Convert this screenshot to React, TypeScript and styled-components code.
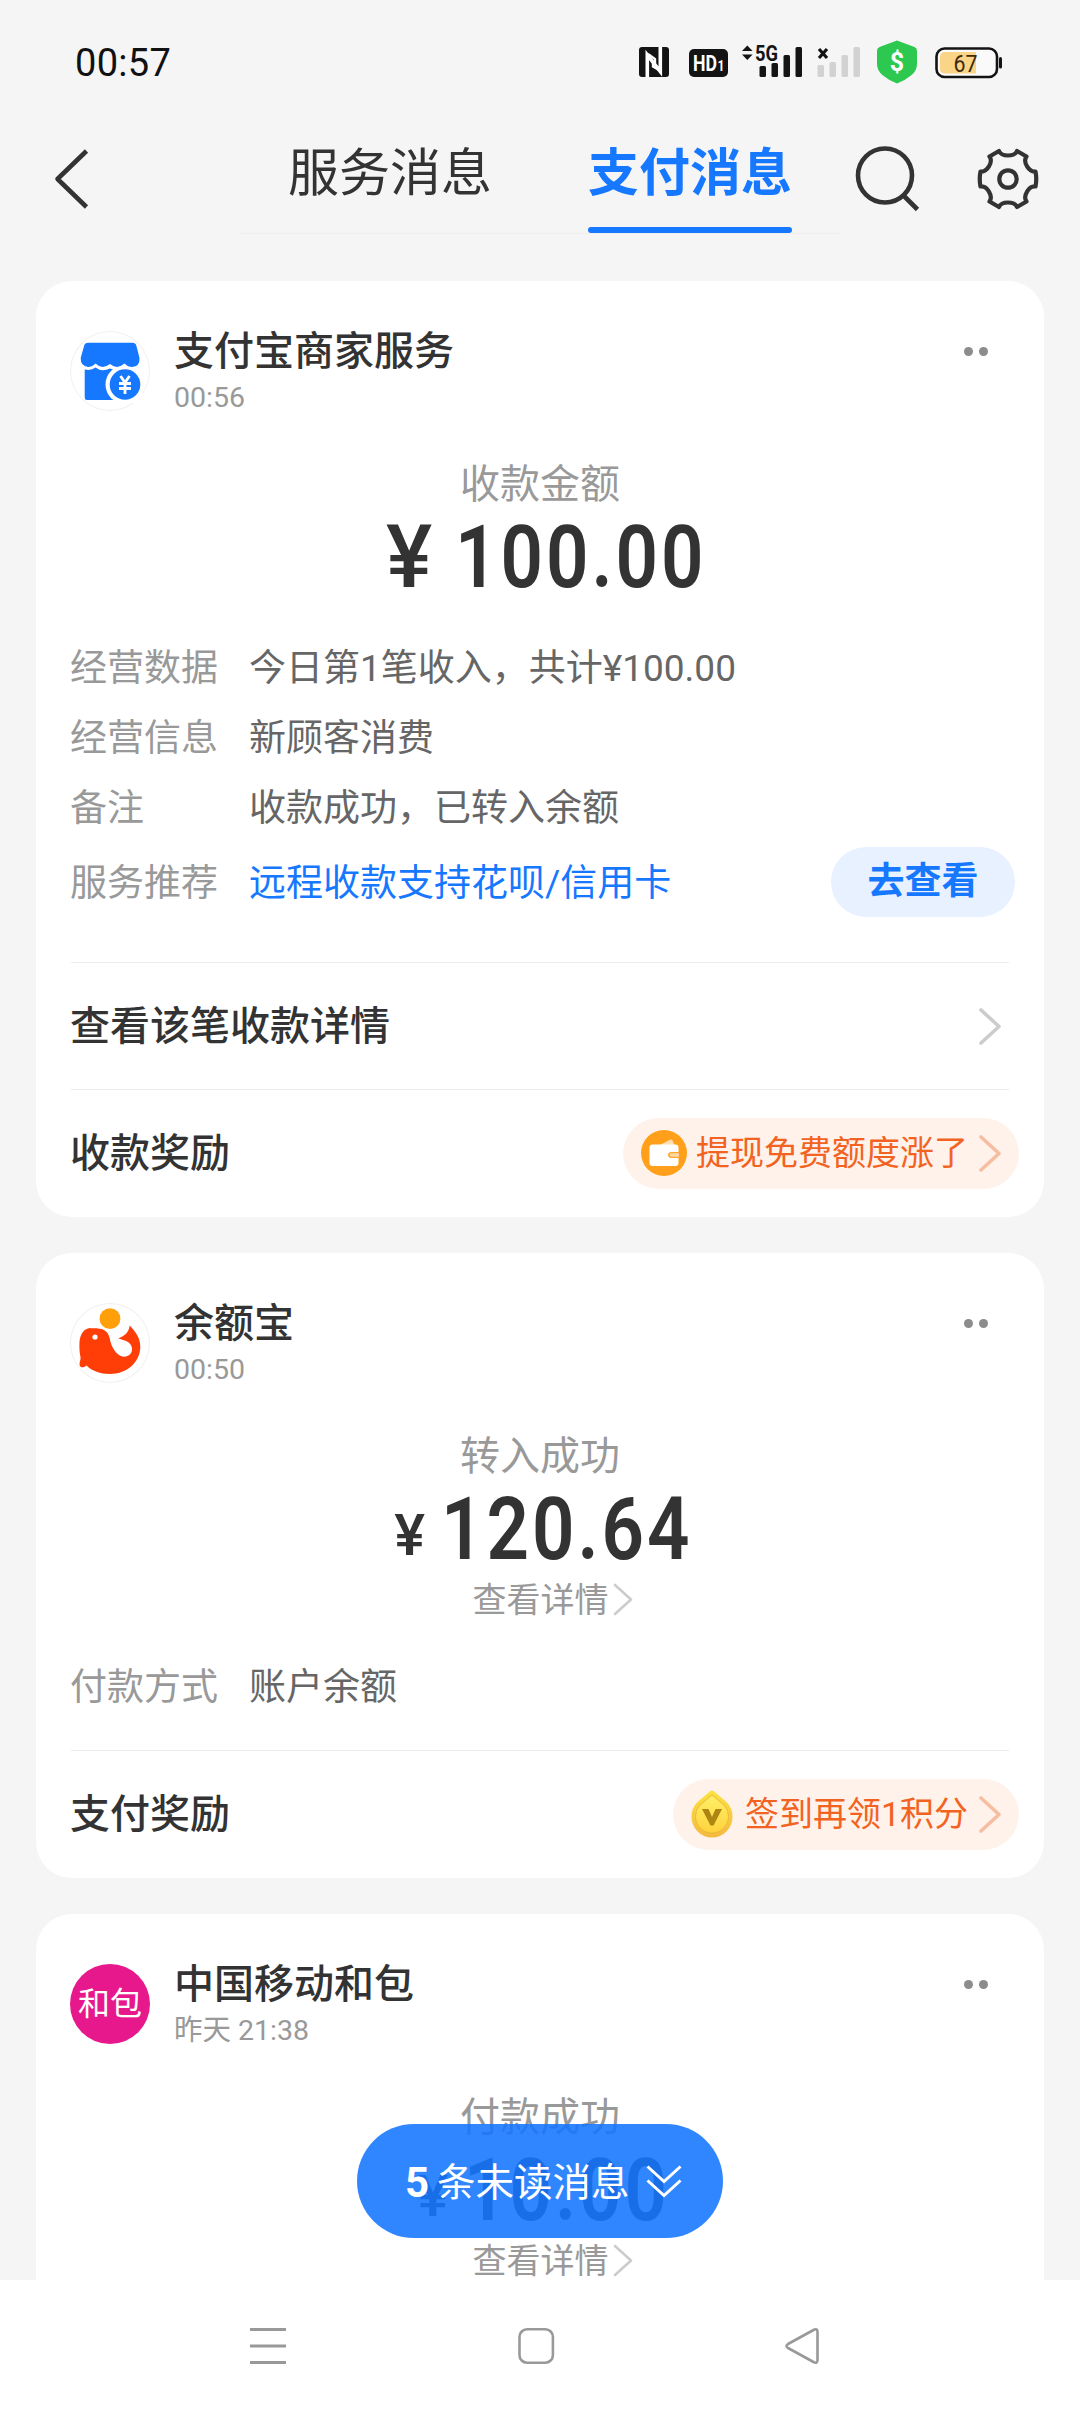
import React from 'react';
import styled, { createGlobalStyle } from 'styled-components';

const SANS = 'Roboto, "Noto Sans CJK SC", "Noto Sans", sans-serif';

const GlobalStyle = createGlobalStyle`
  *, *::before, *::after { box-sizing: border-box; }
  html, body { margin: 0; padding: 0; background: #f5f5f5; }
  body { font-family: ${SANS}; color: #333; }
  svg { display: block; flex: none; }
`;

const Screen = styled.div`
  position: relative;
  display: flex;
  flex-direction: column;
  width: 1080px;
  height: 2412px;
  overflow: hidden;
  background: #f5f5f5;
`;

const StatusBar = styled.header`
  display: flex;
  align-items: center;
  justify-content: space-between;
  height: 124px;
  padding: 0 76px 0 75px;
`;

const Clock = styled.time`
  font-size: 38px;
  line-height: 44px;
  padding-top: 2px;
  letter-spacing: 0.3px;
  color: #111;
`;

const StatusIcons = styled.div`
  display: flex;
  align-items: center;
`;

const NavBar = styled.nav`
  display: flex;
  align-items: flex-start;
  height: 157px;
  padding-left: 53px;
`;

const IconButton = styled.button<{ $width: number; $top: number }>`
  display: flex;
  justify-content: flex-start;
  flex: none;
  width: ${(p) => p.$width}px;
  padding: ${(p) => p.$top}px 0 0;
  border: 0;
  background: none;
`;

const Tabs = styled.div`
  display: flex;
  flex: none;
  width: 600px;
  height: 110px;
  margin-right: 15px;
  border-bottom: 1px solid #eeeeee;
`;

const Tab = styled.div<{ $active?: boolean }>`
  display: flex;
  flex-direction: column;
  align-items: center;
  justify-content: space-between;
  width: 204px;
  margin-left: ${(p) => (p.$active ? 96 : 48)}px;
  padding-top: 17px;
  font-size: 51px;
  line-height: 66px;
  white-space: nowrap;
  font-weight: ${(p) => (p.$active ? 700 : 400)};
  color: ${(p) => (p.$active ? '#1677ff' : '#333')};
`;

const Underline = styled.span`
  width: 204px;
  height: 6px;
  border-radius: 3px;
  background: #1677ff;
`;

const Feed = styled.main`
  flex: 1;
  min-height: 0;
  overflow: hidden;
  display: flex;
  flex-direction: column;
  gap: 36px;
  padding: 0 36px;
`;

const Card = styled.article<{ $bottom?: number }>`
  flex: none;
  border-radius: 36px;
  background: #fff;
  padding: 50px 35px ${(p) => p.$bottom ?? 1}px;
`;

const CardHeader = styled.div`
  display: flex;
  height: 80px;
`;

const Avatar = styled.div<{ $fill?: string }>`
  display: flex;
  align-items: center;
  justify-content: center;
  width: 80px;
  height: 80px;
  margin: 0 1px 0 -1px;
  border-radius: 50%;
  background: ${(p) => p.$fill || '#fff'};
  box-shadow: ${(p) => (p.$fill ? 'none' : 'inset 0 0 0 1px #f0f0f0')};
  color: #fff;
  font-size: 32px;
  line-height: 40px;
`;

const Names = styled.div`
  flex: 1;
  padding-left: 23px;
`;

const Title = styled.h2`
  margin: -4px 0 0;
  font-size: 40px;
  line-height: 50px;
  font-weight: 500;
  color: #333;
`;

const Time = styled.div`
  margin-top: 4px;
  font-size: 28.5px;
  line-height: 34px;
  color: #999;
`;

const More = styled.div`
  display: flex;
  gap: 6px;
  padding: 16px 21px 0 0;
`;

const Dot = styled.i`
  width: 9px;
  height: 9px;
  border-radius: 50%;
  background: #8c8c8c;
`;

const Caption = styled.div`
  margin-top: 47px;
  font-size: 40px;
  line-height: 54px;
  text-align: center;
  color: #999;
`;

const Amount = styled.div<{ $small?: boolean }>`
  display: flex;
  justify-content: center;
  align-items: baseline;
  margin-top: 6px;
  height: 78px;
  padding-left: ${(p) => (p.$small ? 14 : 20)}px;
  font-size: 87px;
  line-height: 79px;
  color: #333;
`;

const Yen = styled.span<{ $small?: boolean }>`
  font-size: ${(p) => (p.$small ? 58 : 87)}px;
  font-weight: 500;
  line-height: 40px;
  margin-right: ${(p) => (p.$small ? 16 : 23)}px;
  transform: translateY(${(p) => (p.$small ? -4 : 0)}px);
`;

/* Narrow figures: the face is condensed horizontally and tracked out. */
const Figures = styled.span<{ $count: number }>`
  font-weight: 600;
  letter-spacing: 3.5px;
  transform: scaleX(0.855);
  transform-origin: left center;
  margin-right: ${(p) => -(p.$count * 6.5 + 3)}px;
`;

const DetailLink = styled.div`
  display: flex;
  align-items: center;
  justify-content: center;
  gap: 4px;
  height: 63px;
  padding-left: 25px;
  font-size: 34px;
  line-height: 48px;
  color: #999;
`;

const Rows = styled.dl<{ $top: number; $bottom: number }>`
  margin: ${(p) => p.$top}px 0 ${(p) => p.$bottom}px;
`;

const Row = styled.div<{ $height?: number }>`
  display: flex;
  align-items: center;
  height: ${(p) => p.$height || 70}px;
  font-size: 37px;
  line-height: 52px;
  white-space: nowrap;
`;

const Key = styled.dt`
  width: 179px;
  margin-left: -1px;
  padding-top: 4px;
  color: #999;
`;

const Value = styled.dd<{ $link?: boolean }>`
  flex: 1;
  margin: 0;
  padding-top: 4px;
  color: ${(p) => (p.$link ? '#1677ff' : '#666')};
`;

const PillButton = styled.button`
  width: 184px;
  height: 70px;
  margin-right: -6px;
  padding: 0;
  border: 0;
  border-radius: 35px;
  background: #e7f1ff;
  color: #1677ff;
  font-family: ${SANS};
  font-size: 37px;
  line-height: 52px;
  font-weight: 700;
`;

const ActionRow = styled.div`
  display: flex;
  align-items: center;
  justify-content: space-between;
  height: 127px;
  border-top: 1px solid #ececec;
`;

const ActionLabel = styled.span`
  margin-left: -1px;
  padding-top: 1px;
  font-size: 40px;
  line-height: 56px;
  font-weight: 500;
  color: #333;
`;

const ChevronSlot = styled.span`
  padding-right: 8px;
`;

const Tag = styled.div`
  display: flex;
  align-items: center;
  height: 71px;
  margin-right: -10px;
  padding: 0 18px;
  border-radius: 36px;
  background: #fff2eb;
  color: #f26322;
  font-size: 34px;
  line-height: 48px;
`;

const TagText = styled.span<{ $left: number }>`
  margin: 0 11px 0 ${(p) => p.$left}px;
`;

const UnreadPill = styled.div`
  position: absolute;
  left: 357px;
  top: 2124px;
  display: flex;
  align-items: center;
  width: 366px;
  height: 114px;
  padding: 3px 0 0 48px;
  border-radius: 57px;
  background: rgba(22, 119, 255, 0.885);
  color: #fff;
  font-size: 38.5px;
  line-height: 54px;
  white-space: nowrap;
`;

const UnreadCount = styled.b`
  font-size: 42px;
  margin-right: 8px;
`;

const UnreadArrow = styled.span`
  margin: -3px 0 0 15px;
`;

const SystemNav = styled.footer`
  display: flex;
  align-items: center;
  height: 132px;
  padding: 0 258px 0 249px;
  justify-content: space-between;
  background: #fff;
`;

const Chevron = ({ w = 22, h = 37, color = '#ccc', stroke = 3.6 }) => (
  <svg width={w} height={h} viewBox={`0 0 ${w} ${h}`} fill="none" stroke={color} strokeWidth={stroke} strokeLinecap="round" strokeLinejoin="round">
    <path d={`M2 2L${w - 2} ${h / 2}L2 ${h - 2}`} />
  </svg>
);

const StatusGlyphs = () => (
  <svg width="366" height="44" viewBox="638 40 366 44" fontFamily={SANS}>
    <rect x="639" y="47" width="30" height="30" rx="3" fill="#141414" />
    <path d="M647.3 77V55l13 16.5V47" fill="none" stroke="#fff" strokeWidth="3.6" />
    <path d="M648 54l7 5v6M660 70.500l-7-4v-4" fill="none" stroke="#fff" strokeWidth="2.4" />
    <rect x="689" y="49" width="39" height="28" rx="5" fill="#141414" />
    <text x="693" y="71" fontSize="22" fontWeight="700" fill="#fff" textLength="24" lengthAdjust="spacingAndGlyphs">HD</text>
    <text x="717.500" y="71" fontSize="14" fontWeight="700" fill="#fff" textLength="7" lengthAdjust="spacingAndGlyphs">1</text>
    <path d="M742 51l5.300-5.500 5.300 5.500zM742 54.500l5.300 5.500 5.300-5.500z" fill="#141414" />
    <text x="755" y="60.500" fontSize="21.500" fontWeight="700" fill="#141414" textLength="23" lengthAdjust="spacingAndGlyphs">5G</text>
    <g fill="#141414">
      <rect x="759.500" y="66" width="6.500" height="11" rx="1.500" />
      <rect x="771.500" y="63" width="6.500" height="14" rx="1.500" />
      <rect x="783.500" y="55" width="6.500" height="22" rx="1.500" />
      <rect x="795.500" y="47" width="6.500" height="30" rx="1.500" />
    </g>
    <path d="M819 49l8 9M827 49l-8 9" stroke="#141414" strokeWidth="3.200" />
    <g fill="#d2d2d2">
      <rect x="817.500" y="65" width="6.500" height="12" rx="1.500" />
      <rect x="829.500" y="62" width="6.500" height="15" rx="1.500" />
      <rect x="841.500" y="55" width="6.500" height="22" rx="1.500" />
      <rect x="853.500" y="47" width="6.500" height="30" rx="1.500" />
    </g>
    <path d="M897 40.500l17.500 6.500q2.500 1 2.500 4v13q0 7-6 11.500-6 5-14 8-8-3-14-8-6-4.500-6-11.500v-13q0-3 2.500-4z" fill="#2dc84f" />
    <text x="897" y="70.500" fontSize="25" fontWeight="700" fill="#fff" textAnchor="middle">$</text>
    <rect x="936.500" y="48.500" width="60.500" height="28.500" rx="8" fill="#fff" fillOpacity="0.500" stroke="#141414" strokeWidth="2.600" />
    <path d="M945 52h31v21.500h-31q-5 0-5-5v-11.500q0-5 5-5z" fill="#fad588" />
    <text x="953.500" y="71.500" fontSize="24" fill="#3d2a08" textLength="24" lengthAdjust="spacingAndGlyphs">67</text>
    <rect x="999" y="57" width="3" height="11.500" rx="1.500" fill="#141414" />
  </svg>
);

const BackIcon = () => (
  <svg width="36" height="60" viewBox="0 0 36 60" fill="none" stroke="#333" strokeWidth="4.600" strokeLinejoin="round">
    <path d="M33.500 2L4.500 30L33.500 58" />
  </svg>
);

const SearchIcon = () => (
  <svg width="66" height="68" viewBox="855 145 66 68" fill="none" stroke="#333" strokeWidth="4.600">
    <circle cx="885" cy="175.500" r="27" />
    <path d="M904 196l13.500 13.500" />
  </svg>
);

const GearIcon = () => (
  <svg width="64" height="64" viewBox="-32 -32 64 64" fill="none" stroke="#333" strokeWidth="4.200" strokeLinejoin="round">
    <path d="M-9 -28C-6.500 -22 6.500 -22 9 -28L18.500 -22.500C14.500 -17 21 -6.500 27.500 -7.500Q29 0 27.500 7.500C21 6.500 14.500 17 18.500 22.500L9 28C6.500 22 -6.500 22 -9 28L-18.500 22.500C-14.500 17 -21 6.500 -27.500 7.500Q-29 0 -27.500 -7.500C-21 -6.500 -14.500 -17 -18.500 -22.500Z" />
    <circle r="8.700" />
  </svg>
);

const StoreLogo = () => (
  <svg width="80" height="80" viewBox="0 0 80 80">
    <path d="M14.700 38.500Q21 40 25.500 36.500Q32 41.500 40 37.500Q47 41.500 54 36.500Q60 40 66 38V69H17Q14.700 69 14.700 66.500Z" fill="#1677ff" />
    <path d="M60 36h12v36H60z" fill="#fff" />
    <circle cx="55" cy="53.500" r="19.500" fill="#fff" />
    <path d="M18 11.700H62.500Q65.500 11.700 66.300 14.500L69.500 27Q70 35.500 62 36Q58 36 54.500 32.500Q47 39 40 33Q32 39 25.500 32.500Q22 36 18 36Q10.500 35 10.700 27L14.200 14.500Q15 11.700 18 11.700Z" fill="#1677ff" />
    <circle cx="55" cy="53.500" r="17" fill="#fff" />
    <circle cx="55" cy="53.500" r="15.300" fill="#1677ff" />
    <path d="M50.500 45l4.500 6.500 4.500-6.500M49 52.500h12M49 57.500h12M55 51v12" fill="none" stroke="#fff" strokeWidth="2.800" />
  </svg>
);

const WhaleLogo = () => (
  <svg width="80" height="80" viewBox="0 0 80 80">
    <circle cx="40" cy="15.700" r="10.400" fill="#ff9f0a" />
    <path d="M9.400 42C9.400 34 12 26 19.700 25C26 26 37 23 39.700 35.300C41 43 46 53.700 54.200 53.700C59 53.700 62.500 50 62 45.500C61.500 38 53 37.500 48.300 35.300C53 34 59 30 59.700 22.600C66 29 70.500 36 70.300 44C70 60 56 71 40 71C30 71 22 68 16.500 62.500C14 65 10 65 9.600 62C9.200 59 11 57 10.500 54C9.600 50 9.400 46 9.400 42Z" fill="#ff3d07" />
    <circle cx="25" cy="34" r="2.600" fill="#fff" />
  </svg>
);

const WalletIcon = () => (
  <svg width="46" height="46" viewBox="0 0 46 46">
    <circle cx="23" cy="23" r="23" fill="#ff9f1a" />
    <path d="M18 15.500L29 9.800Q31 9 32 11.500L33.500 15.500Z" fill="#ffe0b5" />
    <rect x="8.500" y="14.500" width="29" height="21.500" rx="3" fill="#fff" />
    <path d="M38 22H30.500Q27 22 27 25T30.500 28H38Z" fill="#ffa62e" />
    <path d="M38 23.300H31Q28.600 23.300 28.600 25T31 26.700H38Z" fill="#ffd9a3" />
  </svg>
);

const CoinIcon = () => (
  <svg width="42" height="48" viewBox="0 0 42 48">
    <defs>
      <linearGradient id="coin" x1="0" y1="0" x2="0" y2="1">
        <stop offset="0" stopColor="#fbe33f" />
        <stop offset="1" stopColor="#f4b93f" />
      </linearGradient>
      <linearGradient id="coinFace" x1="0" y1="0" x2="0" y2="1">
        <stop offset="0" stopColor="#fff067" />
        <stop offset="1" stopColor="#ffd23e" />
      </linearGradient>
    </defs>
    <path d="M21 0.500Q23 0.500 25 3L36 12.500Q41.500 18 41.500 27A20.500 20.500 0 0 1 0.500 27Q0.500 18 6 12.500L17 3Q19 0.500 21 0.500Z" fill="url(#coin)" />
    <path d="M21 5L33.500 15.500Q37.500 20 37.500 26.500A16.500 16.500 0 0 1 4.500 26.500Q4.500 20 8.500 15.500Z" fill="url(#coinFace)" stroke="#edb83a" strokeWidth="1" />
    <path d="M11 19H17.500L21 27L24.500 19H31L22.500 35.500H19.500Z" fill="#ac8512" />
  </svg>
);

const DoubleDown = () => (
  <svg width="38" height="36" viewBox="0 0 38 36" fill="none" stroke="#fff" strokeWidth="3">
    <path d="M2.500 3.500L19 18.500L35.500 3.500M2.500 17.500L19 32.500L35.500 17.500" />
  </svg>
);

type CardHeadProps = { avatar: React.ReactNode; fill?: string; title: string; time: string };

const CardHead = ({ avatar, fill, title, time }: CardHeadProps) => (
  <CardHeader>
    <Avatar $fill={fill}>{avatar}</Avatar>
    <Names>
      <Title>{title}</Title>
      <Time>{time}</Time>
    </Names>
    <More>
      <Dot />
      <Dot />
    </More>
  </CardHeader>
);

const Sum = ({ value, small }: { value: string; small?: boolean }) => (
  <Amount $small={small}>
    <Yen $small={small}>¥</Yen>
    <Figures $count={value.length - 1}>{value}</Figures>
  </Amount>
);

const ViewDetail = () => (
  <DetailLink>
    查看详情
    <Chevron w={20} h={33} stroke={2.6} />
  </DetailLink>
);

export default function App() {
  return (
    <Screen>
      <GlobalStyle />
      <StatusBar>
        <Clock>00:57</Clock>
        <StatusIcons>
          <StatusGlyphs />
        </StatusIcons>
      </StatusBar>
      <NavBar>
        <IconButton $width={187} $top={25}>
          <BackIcon />
        </IconButton>
        <Tabs>
          <Tab>服务消息</Tab>
          <Tab $active>
            支付消息
            <Underline />
          </Tab>
        </Tabs>
        <IconButton $width={121} $top={21}>
          <SearchIcon />
        </IconButton>
        <IconButton $width={70} $top={23}>
          <GearIcon />
        </IconButton>
      </NavBar>

      <Feed>
        <Card>
          <CardHead avatar={<StoreLogo />} title="支付宝商家服务" time="00:56" />
          <Caption>收款金额</Caption>
          <Sum value="100.00" />
          <Rows $top={36} $bottom={40}>
            <Row>
              <Key>经营数据</Key>
              <Value>今日第1笔收入，共计¥100.00</Value>
            </Row>
            <Row>
              <Key>经营信息</Key>
              <Value>新顾客消费</Value>
            </Row>
            <Row>
              <Key>备注</Key>
              <Value>收款成功，已转入余额</Value>
            </Row>
            <Row $height={80}>
              <Key>服务推荐</Key>
              <Value $link>远程收款支持花呗/信用卡</Value>
              <PillButton>去查看</PillButton>
            </Row>
          </Rows>
          <ActionRow>
            <ActionLabel>查看该笔收款详情</ActionLabel>
            <ChevronSlot>
              <Chevron />
            </ChevronSlot>
          </ActionRow>
          <ActionRow>
            <ActionLabel>收款奖励</ActionLabel>
            <Tag>
              <WalletIcon />
              <TagText $left={9}>提现免费额度涨了</TagText>
              <Chevron color="#f7bda2" />
            </Tag>
          </ActionRow>
        </Card>

        <Card>
          <CardHead avatar={<WhaleLogo />} title="余额宝" time="00:50" />
          <Caption>转入成功</Caption>
          <Sum value="120.64" small />
          <ViewDetail />
          <Rows $top={20} $bottom={29}>
            <Row>
              <Key>付款方式</Key>
              <Value>账户余额</Value>
            </Row>
          </Rows>
          <ActionRow>
            <ActionLabel>支付奖励</ActionLabel>
            <Tag>
              <CoinIcon />
              <TagText $left={12}>签到再领1积分</TagText>
              <Chevron color="#f7bda2" />
            </Tag>
          </ActionRow>
        </Card>

        <Card $bottom={120}>
          <CardHead avatar="和包" fill="#e6188c" title="中国移动和包" time="昨天 21:38" />
          <Caption>付款成功</Caption>
          <Sum value="10.00" small />
          <ViewDetail />
        </Card>
      </Feed>

      <UnreadPill>
        <UnreadCount>5</UnreadCount>
        条未读消息
        <UnreadArrow>
          <DoubleDown />
        </UnreadArrow>
      </UnreadPill>

      <SystemNav>
        <svg width="38" height="38" viewBox="0 0 38 38" stroke="#999" strokeWidth="3">
          <path d="M1 2.500h36M1 19h36M1 35.500h36" />
        </svg>
        <svg width="38" height="38" viewBox="0 0 38 38" fill="none" stroke="#999" strokeWidth="2.600">
          <rect x="2.500" y="2.300" width="33.400" height="33.400" rx="7.500" />
        </svg>
        <svg width="38" height="38" viewBox="0 0 38 38" fill="none" stroke="#999" strokeWidth="2.600" strokeLinejoin="round">
          <path d="M29.500 3Q33.500 1 33.500 5V33Q33.500 37 29.500 35L4 21Q1 19 4 17Z" />
        </svg>
      </SystemNav>
    </Screen>
  );
}
